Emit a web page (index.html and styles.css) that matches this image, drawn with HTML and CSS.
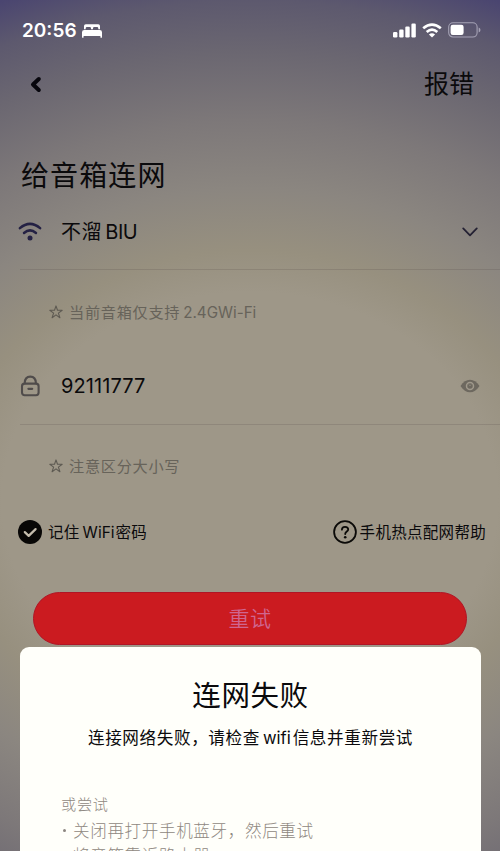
FILE: index.html
```html
<!DOCTYPE html>
<html lang="zh-CN">
<head>
<meta charset="utf-8">
<title>给音箱连网</title>
<link rel="stylesheet" href="styles.css">
</head>
<body>
<div class="screen">
  <header class="status">
    <div class="status-left">
      <span class="clock">20:56</span>
      <svg class="bed" width="20" height="14" viewBox="0 0 20 14" fill="#fff"><path d="M2 5.2V2Q2 .2 3.8 .2H16.2Q18 .2 18 2V5.2H16.3V4.2Q16.3 3 15 3H12.2Q11 3 11 4.2V5.2H9V4.2Q9 3 7.8 3H5Q3.7 3 3.7 4.2V5.2Z"/><path d="M0 13.2V8.2Q0 6 2.3 6H17.7Q20 6 20 8.2V13.2Q20 13.8 19.2 13.8T18.4 13.2V12H1.6V13.2Q1.6 13.8 .8 13.8T0 13.2Z"/></svg>
    </div>
    <div class="status-right">
      <svg width="23" height="15" viewBox="0 0 23 15" fill="#fff"><rect x="0" y="9" width="4.4" height="5.5" rx="1.2"/><rect x="6.2" y="6.6" width="4.4" height="7.9" rx="1.2"/><rect x="12.3" y="3.6" width="4.4" height="10.9" rx="1.2"/><rect x="18.4" y=".5" width="4.4" height="14" rx="1.2"/></svg>
      <svg width="20" height="15" viewBox="0 0 20 15" fill="none" stroke="#fff" stroke-width="2.7"><path d="M1.2 5.3Q10-2.1 18.8 5.3"/><path d="M4.7 8.9Q10 4.3 15.3 8.9"/><path d="M10 14.5L6.9 11.5Q10 9.1 13.1 11.5Z" fill="#fff" stroke="none"/></svg>
      <svg width="33" height="16" viewBox="0 0 33 16"><rect x=".7" y=".8" width="28.4" height="14.2" rx="4.3" fill="none" stroke="#a5a2b5" stroke-width="1.1"/><rect x="2.6" y="2.8" width="13" height="10.2" rx="2.2" fill="#fff"/><path d="M30.7 5.4Q32.5 6.2 32.5 8T30.7 10.4Z" fill="#a5a2b5"/></svg>
    </div>
  </header>

  <nav class="nav">
    <svg width="12" height="17" viewBox="0 0 12 17" fill="none" stroke="#07060d" stroke-width="4" stroke-linecap="round" stroke-linejoin="round"><path d="M8.8 3L3 8.5L8.8 14"/></svg>
    <span class="report">报错</span>
  </nav>

  <h1 class="title">给音箱连网</h1>

  <div class="field network">
    <svg class="field-icon" width="24" height="20" viewBox="0 0 24 20" fill="none" stroke="#242144" stroke-width="2.5" stroke-linecap="round"><path d="M1.9 6.1Q12-2.4 22.1 6.1"/><path d="M6 11Q12 5.7 18 11"/><circle cx="12" cy="16" r="2.5" fill="#242144" stroke="none"/></svg>
    <span class="value">不溜<span class="latin">BIU</span></span>
    <svg class="chevron" width="18" height="12" viewBox="0 0 18 12" fill="none" stroke="#242133" stroke-width="1.8" stroke-linecap="round" stroke-linejoin="round"><path d="M2.2 2.4L9 9.3L15.8 2.4"/></svg>
  </div>
  <p class="hint"><svg class="star" width="14" height="14" viewBox="0 0 14 14"><path d="M7 .9L8.5 5.3H13.2L9.4 8.1L10.9 12.7L7 9.9L3.1 12.7L4.6 8.1L.8 5.3H5.5Z"/></svg><span>当前音箱仅支持<span class="latin">2.4GWi-Fi</span></span></p>

  <div class="field password">
    <svg class="field-icon" width="24" height="22" viewBox="0 0 24 22" fill="none" stroke="#504c4b" stroke-width="2.1" stroke-linecap="round"><rect x="4" y="8.6" width="16.6" height="11.6" rx="2.6"/><path d="M6.7 8.2Q6.8 1.6 12.3 1.6T17.9 8.2"/><path d="M10.4 13.8H14.2" stroke-width="2.2"/></svg>
    <span class="value digits">92111777</span>
    <svg class="eye" width="20" height="14" viewBox="0 0 20 14"><path d="M.5 7C3.2 2.7 6.4.7 10 .7S16.8 2.7 19.5 7C16.8 11.3 13.6 13.3 10 13.3S3.2 11.3.5 7Z" fill="#6d685f"/><circle cx="10" cy="7" r="3.5" fill="#6d685f" stroke="#a0998c" stroke-width="1.5"/><path d="M9 5.6L10 6.7L11 5.6" fill="none" stroke="#a0998c" stroke-width=".8"/></svg>
  </div>
  <p class="hint case"><svg class="star" width="14" height="14" viewBox="0 0 14 14"><path d="M7 .9L8.5 5.3H13.2L9.4 8.1L10.9 12.7L7 9.9L3.1 12.7L4.6 8.1L.8 5.3H5.5Z"/></svg><span>注意区分大小写</span></p>

  <div class="options">
    <span class="option"><svg width="24" height="24" viewBox="0 0 24 24"><circle cx="12" cy="12" r="12" fill="#080706"/><path d="M6.8 12.1L10.7 15.9L17.6 9.1" fill="none" stroke="#c4bcad" stroke-width="2.2" stroke-linecap="round" stroke-linejoin="round"/></svg><span class="option-text">记住<span class="latin">WiFi</span>密码</span></span>
    <span class="option help"><svg width="24" height="24" viewBox="0 0 24 24" fill="none" stroke="#0b0a08"><circle cx="12" cy="12" r="10.9" stroke-width="1.8"/><path d="M8.9 9.7C8.9 7.8 10.2 6.8 12 6.8S15.2 7.8 15.2 9.5C15.2 11.5 12.2 11.7 12.2 14" stroke-width="1.8" stroke-linecap="round"/><circle cx="12.2" cy="17.2" r="1.3" fill="#0b0a08" stroke="none"/></svg><span class="option-text">手机热点配网帮助</span></span>
  </div>

  <button class="retry">重试</button>

  <section class="dialog">
    <h2 class="dialog-title">连网失败</h2>
    <p class="message">连接网络失败，请检查<span class="latin">wifi</span>信息并重新尝试</p>
    <div class="tips">
      <p class="tips-head">或尝试</p>
      <ul class="tips-list">
        <li>关闭再打开手机蓝牙，然后重试</li>
        <li>将音箱靠近路由器</li>
      </ul>
    </div>
  </section>
</div>
</body>
</html>
```

FILE: styles.css
```css
* { box-sizing: border-box; margin: 0; padding: 0; }

body {
  font-family: Inter, "Noto Sans CJK SC", sans-serif;
  color: #0b0a0c;
  overflow: hidden;
}

svg { display: block; flex: none; }

.screen {
  width: 500px;
  height: 851px;
  overflow: hidden;
  display: flex;
  flex-direction: column;
  background: radial-gradient(620px 520px at 250px 500px,
    #9e9788 0%, #9e9788 40%, #97907f 48%, #8b8680 60%, #7d7879 73%,
    #6b6771 86%, #5d596e 96%, #4a4570 104%);
}
.screen > * { flex: none; }

.status {
  height: 60px;
  padding: 0 20px 0 22px;
  display: flex;
  align-items: center;
  justify-content: space-between;
}
.status-left, .status-right { display: flex; align-items: center; }
.status-left { gap: 5px; }
.status-right { gap: 6px; margin-right: -1px; }
.clock { color: #fff; font-size: 19px; font-weight: 600; letter-spacing: 0; }
.bed { margin-top: 1px; }

.nav {
  height: 48px;
  padding: 0 26px 0 30px;
  display: flex;
  align-items: center;
  justify-content: space-between;
}
.report { font-size: 25px; line-height: 48px; }

.title {
  margin-top: 43px;
  padding-left: 21px;
  height: 50px;
  line-height: 50px;
  font-size: 28px;
  font-weight: 400;
  letter-spacing: 1.1px;
}

.field {
  display: flex;
  align-items: center;
  margin-left: 20px;
  border-bottom: 1px solid rgba(70, 62, 58, 0.17);
}
.network { height: 69px; padding: 0 21px 7px 0; }
.password { height: 76px; padding: 0 20px 1px 0; margin-top: 25px; }
.field-icon { margin: 0 19px 0 -2px; }
.value { flex: 1; font-size: 20px; line-height: 30px; letter-spacing: 0.6px; }
.value .latin { margin-left: 3px; letter-spacing: -0.4px; }
.digits { letter-spacing: 0.1px; }

.hint {
  display: flex;
  align-items: center;
  height: 24px;
  margin: 30px 0 0 49px;
  font-size: 15.2px;
  letter-spacing: 0.7px;
  color: #67635a;
}
.hint > span { margin-top: -3px; }
.case { margin-top: 29px; }
.hint .latin { margin-left: 3px; letter-spacing: 0; }
.star {
  margin-right: 6px;
  fill: none;
  stroke: #5e5a52;
  stroke-width: 1.1;
  stroke-linejoin: round;
}

.options {
  display: flex;
  justify-content: space-between;
  height: 24px;
  margin: 42px 12px 0 18px;
}
.option { display: flex; align-items: center; gap: 6px; }
.help { gap: 3px; margin-right: 2px; }
.option-text { margin-top: -2px; font-size: 15.5px; letter-spacing: 0.3px; }
.option-text .latin { margin: 0 1px 0 3px; letter-spacing: 0; }

.retry {
  height: 53px;
  margin: 48px 33px 0;
  padding-bottom: 3px;
  border: 1px solid #b01525;
  border-radius: 27px;
  background: #cb1b20;
  color: #cf6690;
  font: 350 21px/48px "Noto Sans CJK SC", sans-serif;
  letter-spacing: 0.6px;
}

.dialog {
  height: 204px;
  overflow: hidden;
  margin: 2px 19px 0 20px;
  padding-top: 28px;
  border-radius: 9px 9px 0 0;
  background: #fffffa;
  text-align: center;
}
.dialog-title {
  height: 42px;
  line-height: 42px;
  font-size: 28.5px;
  font-weight: 400;
  letter-spacing: 0.6px;
}
.message {
  margin-top: 9px;
  line-height: 24px;
  font-size: 16.6px;
  letter-spacing: 0.6px;
  white-space: nowrap;
}
.message .latin { margin: 0 2px 0 3px; letter-spacing: 0; }

.tips { margin: 43px 0 0 41px; text-align: left; color: #8f8881; font-weight: 300; }
.tips-head { font-size: 15.2px; line-height: 24px; letter-spacing: 0.7px; }
.tips-list { list-style: none; font-size: 16.6px; letter-spacing: 0.6px; }
.tips-list li { display: flex; align-items: center; height: 25px; }
.tips-list li::before {
  content: "";
  width: 3px;
  height: 3px;
  margin: 1px 7px 0 2px;
  border-radius: 50%;
  background: #8c8680;
}
```
